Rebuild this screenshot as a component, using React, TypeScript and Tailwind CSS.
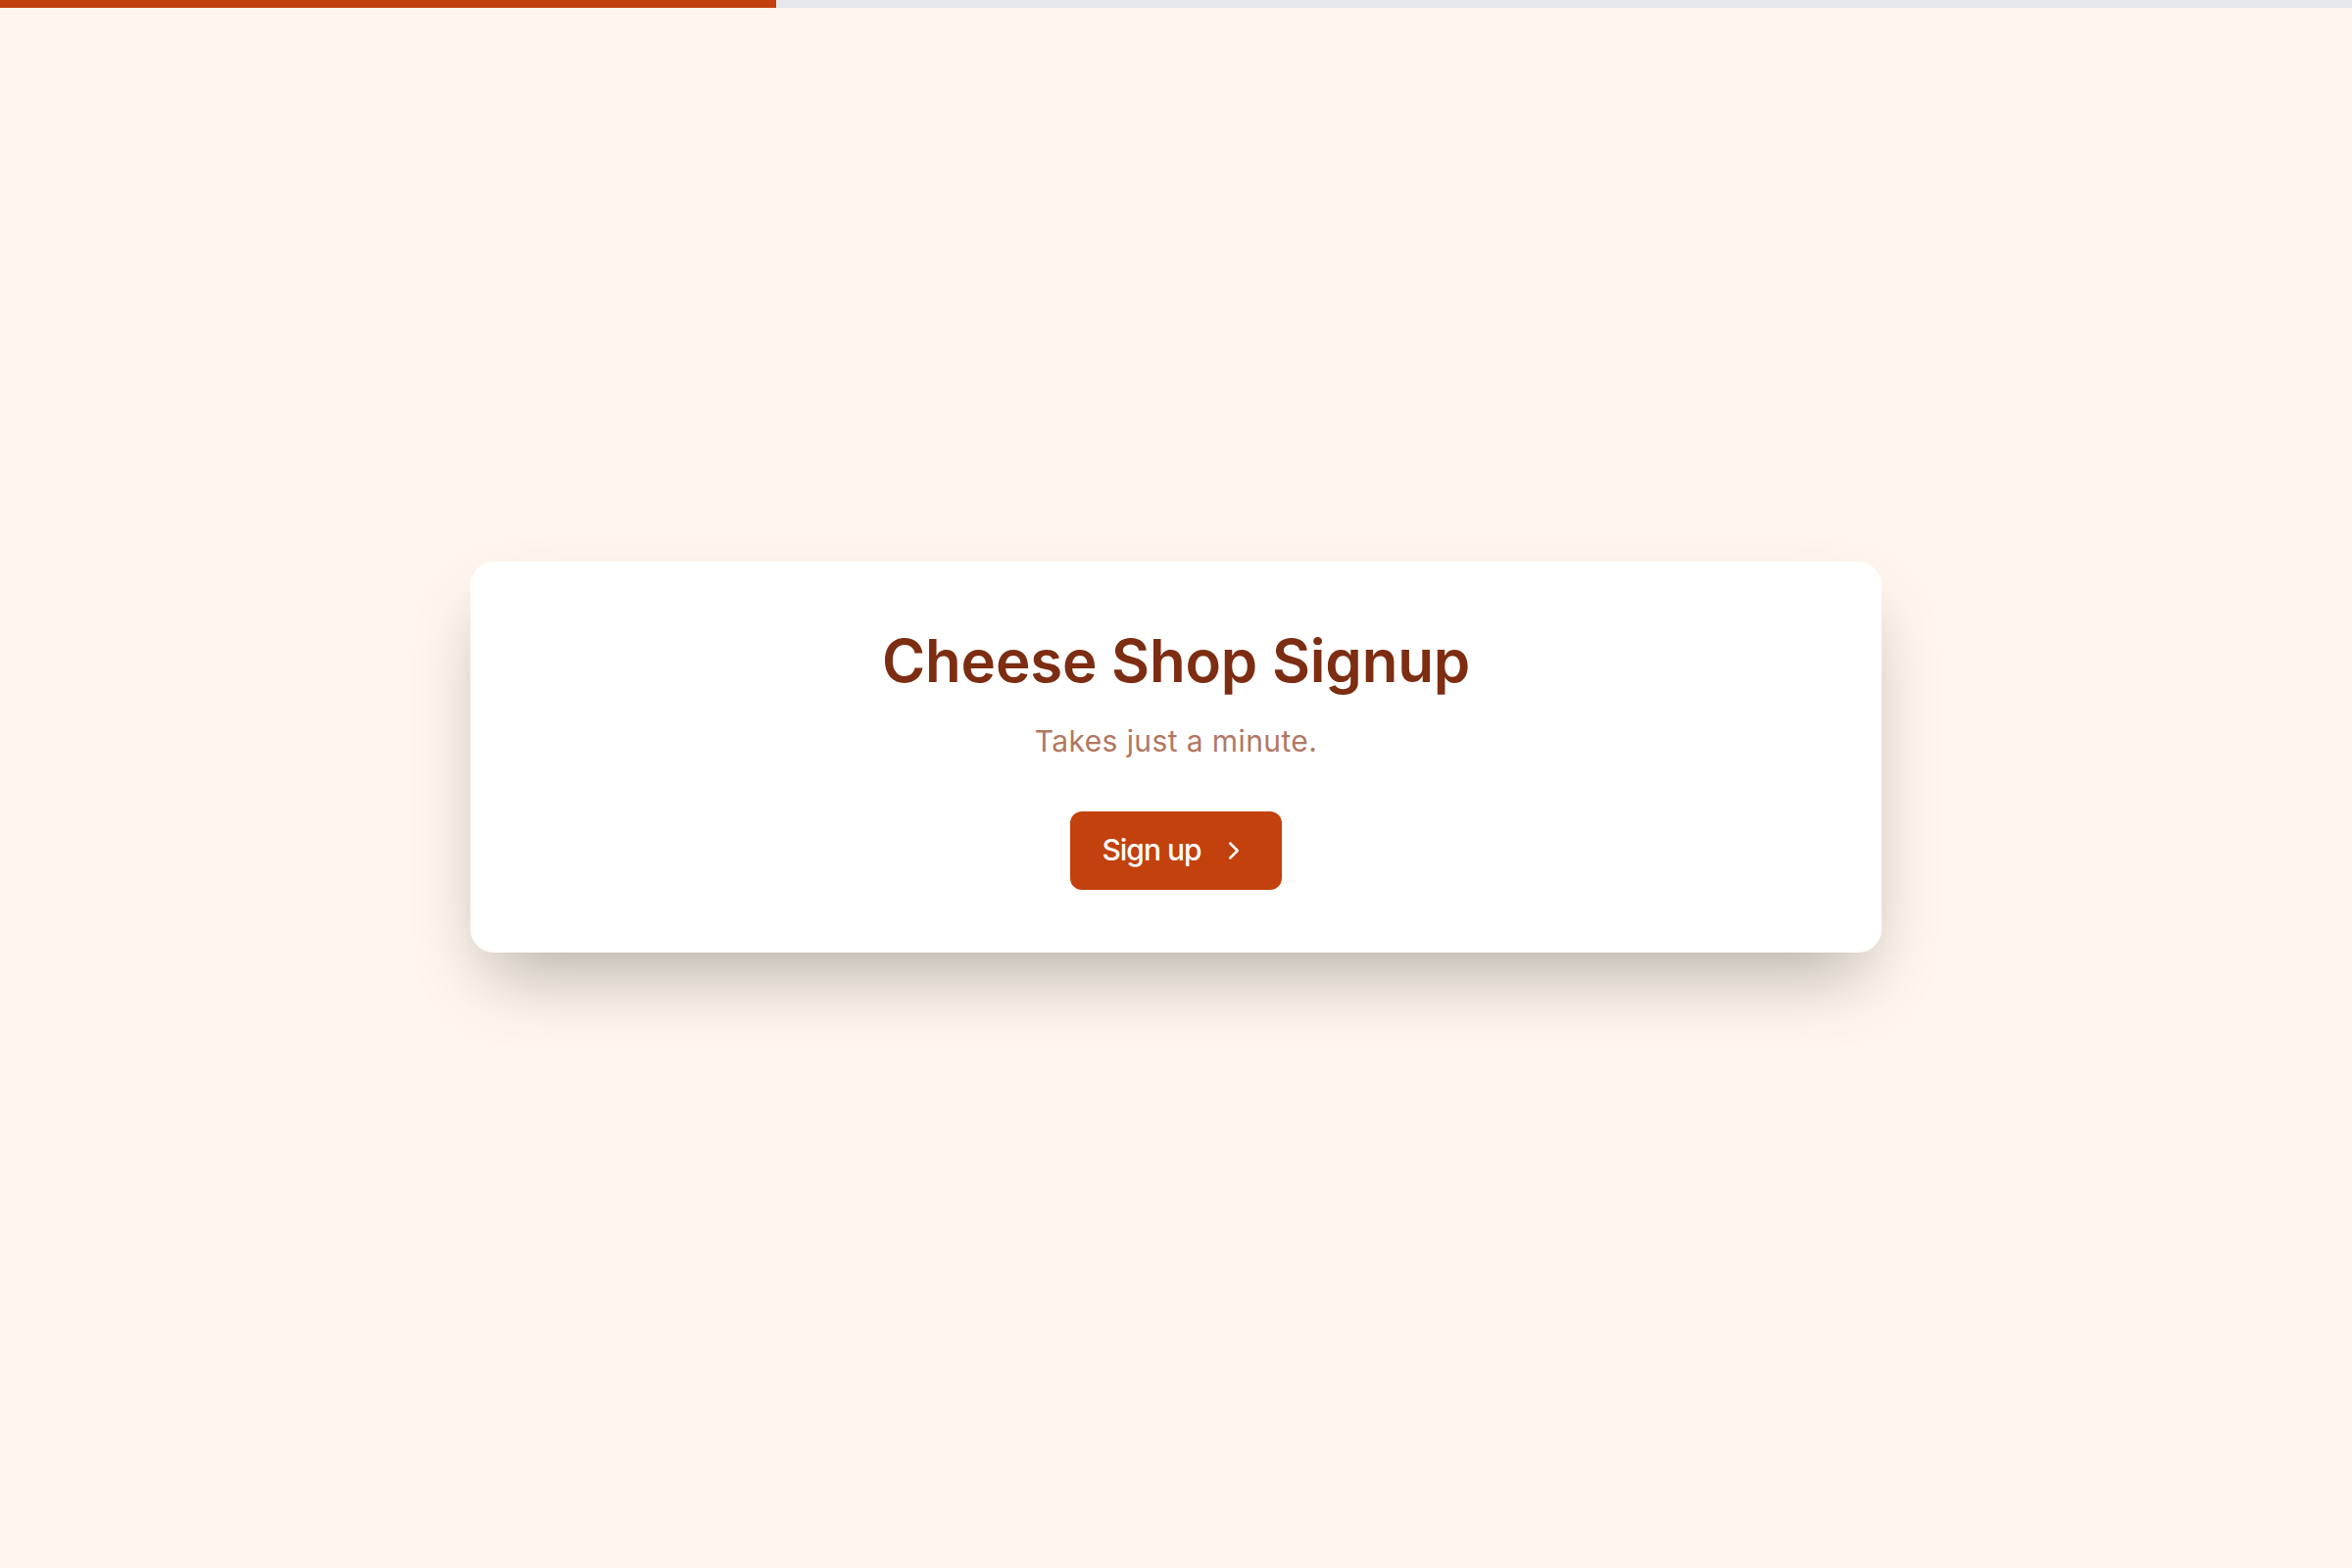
import React from "react";
import { ChevronRight } from "lucide-react";

export default function App() {
  return (
    <div
      className="min-h-screen flex flex-col bg-[#fff7ed]"
      style={{ fontFamily: "Inter, 'Noto Sans', sans-serif" }}
    >
      <div className="h-[8px] w-full bg-[#e5e7eb] flex">
        <div className="h-full w-[33%] bg-[#c2410c]" />
      </div>
      <main className="flex-1 flex items-center justify-center pb-[64px]">
        <div className="w-[1440px] bg-white rounded-[24px] shadow-[0_37px_75px_-18px_rgba(0,0,0,0.3)] pt-[71px] pb-[64px] flex flex-col items-center">
          <h1 className="text-[60px] leading-none font-semibold text-[#7c2d12] tracking-[-0.2px]">
            Cheese Shop Signup
          </h1>
          <p className="mt-[30px] text-[30px] leading-[45px] text-[#b27762] tracking-[0.4px]">
            Takes just a minute.
          </p>
          <button className="mt-[49px] h-[80px] pl-[32px] pr-[34px] rounded-[12px] bg-[#c2410c] text-white text-[30px] font-medium flex items-center gap-[18px] tracking-[-1px]">
            <span>Sign up</span>
            <ChevronRight size={30} strokeWidth={2} />
          </button>
        </div>
      </main>
    </div>
  );
}
